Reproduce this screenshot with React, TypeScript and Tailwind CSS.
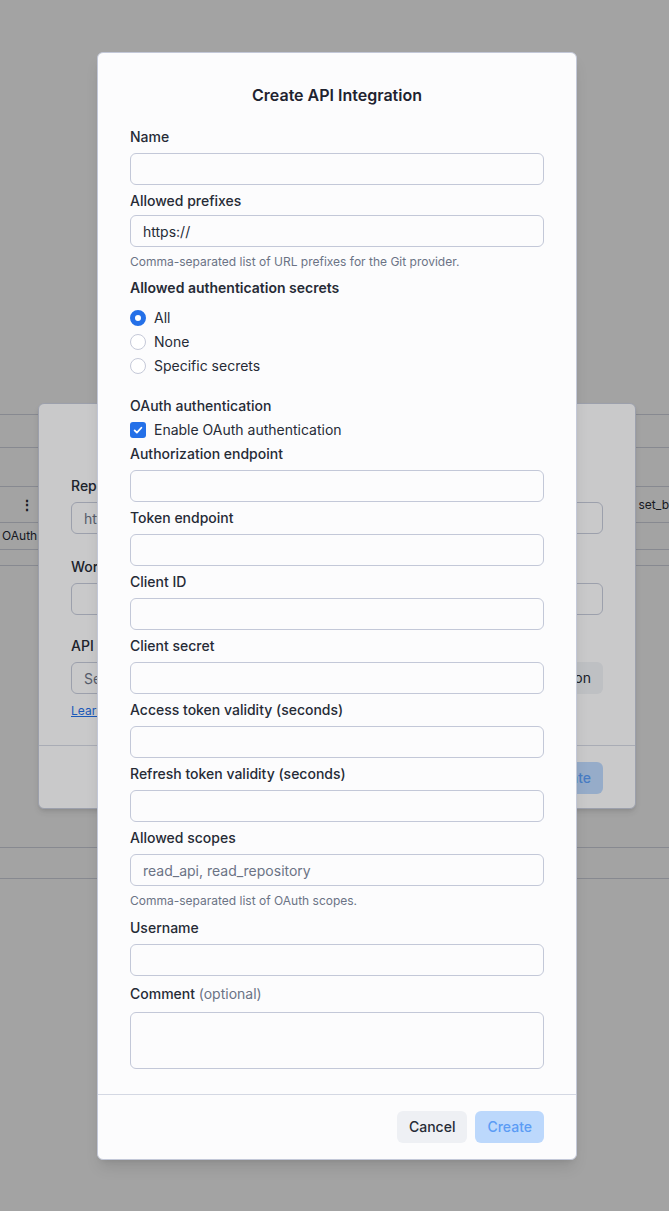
import React from "react";

const FONT = { fontFamily: "Inter, 'Noto Sans', sans-serif" };

const Field = ({
  label,
  value,
  placeholder,
  help,
  tight,
}: {
  label: React.ReactNode;
  value?: string;
  placeholder?: string;
  help?: string;
  tight?: boolean;
}) => (
  <div className="flex flex-col">
    <label className={`text-sm leading-5 font-medium text-[#262b36] ${tight ? "mb-1" : "mb-1.5"}`}>{label}</label>
    <input
      readOnly
      value={value ?? ""}
      placeholder={placeholder}
      className="h-8 w-full rounded-md border border-[#c3c8d8] bg-[#fcfcfd] px-3 text-sm text-[#262b36] placeholder:text-[#6b7385] outline-none"
    />
    {help && <p className="mt-[7px] text-xs leading-4 text-[#6b7385]">{help}</p>}
  </div>
);

const Radio = ({ label, checked }: { label: string; checked?: boolean }) => (
  <div className="flex h-6 items-center gap-2">
    {checked ? (
      <span className="h-4 w-4 rounded-full border-[5px] border-[#2470e8] bg-white" />
    ) : (
      <span className="h-4 w-4 rounded-full border border-[#c5c9d8] bg-white" />
    )}
    <span className="text-sm text-[#262b36]">{label}</span>
  </div>
);

export default function App() {
  return (
    <div className="relative h-[1211px] w-[669px] overflow-hidden bg-white text-[#262b36]" style={FONT}>
      {/* underlying page: a table */}
      <div className="pt-[414px]">
        <div className="h-[33px] border-t border-[#d4d8e3]" />
        <div className="h-[39px] border-t border-[#d4d8e3]" />
        <div className="flex h-[36px] items-center justify-between border-t border-[#d4d8e3] pl-[20px] pr-0">
          <span className="text-sm font-bold leading-none">⋮</span>
          <span className="text-xs">set_b</span>
        </div>
        <div className="flex h-[27px] items-center border-t border-[#d4d8e3] pl-[2px]">
          <span className="text-xs">OAuth</span>
        </div>
        <div className="h-[16px] border-t border-[#d4d8e3]" />
        <div className="h-[282px] border-t border-[#d4d8e3]" />
        <div className="h-[31px] border-t border-[#d4d8e3]" />
        <div className="border-t border-[#d4d8e3]" />
      </div>

      {/* first overlay + background dialog */}
      <div className="absolute inset-0 bg-black/20" />
      <div className="absolute left-[38px] top-[403px] flex h-[406px] w-[598px] flex-col rounded-md border border-[#c3c8d8] bg-[#fcfcfd] shadow-md">
        <div className="flex flex-col px-8 pt-[72px]">
          <div className="flex flex-col">
            <label className="mb-1.5 text-sm font-medium leading-5">Repository URL</label>
            <input readOnly placeholder="https://github.com/org/repo" className="h-8 rounded-md border border-[#c3c8d8] px-3 text-sm placeholder:text-[#6b7385]" />
          </div>
          <div className="mt-[23px] flex flex-col">
            <label className="mb-1.5 text-sm font-medium leading-5">Workspace</label>
            <input readOnly className="h-8 rounded-md border border-[#c3c8d8] px-3 text-sm" />
          </div>
          <div className="mt-[21px] flex flex-col">
            <label className="mb-1.5 text-sm font-medium leading-5">API integration</label>
            <div className="flex gap-2">
              <input readOnly placeholder="Select an integration" className="h-8 flex-1 rounded-md border border-[#c3c8d8] px-3 text-sm placeholder:text-[#6b7385]" />
              <button className="h-8 rounded-md bg-[#eef0f4] px-3 text-sm">New integration</button>
            </div>
            <a className="mt-[9px] text-xs leading-4 text-[#2470e8] underline">Learn more</a>
          </div>
        </div>
        <div className="mt-[26px] flex justify-end border-t border-[#d4d8e3] px-8 pt-4">
          <button className="h-8 rounded-md bg-[#bcd8fc] px-3 text-sm font-medium text-[#5b9cf5]">Create</button>
        </div>
      </div>

      {/* second overlay + main dialog */}
      <div className="absolute inset-0 bg-black/20" />
      <div className="absolute left-[97px] top-[52px] w-[480px] rounded-md border border-[#c3c8d8] bg-[#fcfcfd] shadow-lg">
        <div className="px-8 pt-[30px]">
          <h2 className="text-center text-base font-semibold leading-6 text-[#1f2330]">Create API Integration</h2>
          <div className="mt-5 flex flex-col gap-1.5">
            <Field label="Name" />
            <Field label="Allowed prefixes" tight value="https://" help="Comma-separated list of URL prefixes for the Git provider." />
          </div>
          <div className="mt-2">
            <div className="text-sm font-semibold leading-5 text-[#262b36]">Allowed authentication secrets</div>
            <div className="mt-2 flex flex-col">
              <Radio label="All" checked />
              <Radio label="None" />
              <Radio label="Specific secrets" />
            </div>
          </div>
          <div className="mt-[18px]">
            <div className="text-sm font-medium leading-5 text-[#262b36]">OAuth authentication</div>
            <div className="mt-0.5 flex h-6 items-center gap-2">
              <span className="flex h-4 w-4 items-center justify-center rounded-[3px] bg-[#2470e8]">
                <svg viewBox="0 0 16 16" className="h-3 w-3" fill="none" stroke="white" strokeWidth="2.4" strokeLinecap="round" strokeLinejoin="round">
                  <path d="M3.5 8.5l3 3 6-6.5" />
                </svg>
              </span>
              <span className="text-sm text-[#262b36]">Enable OAuth authentication</span>
            </div>
          </div>
          <div className="mt-0.5 flex flex-col gap-1.5">
            <Field label="Authorization endpoint" />
            <Field label="Token endpoint" />
            <Field label="Client ID" />
            <Field label="Client secret" />
            <Field label="Access token validity (seconds)" />
            <Field label="Refresh token validity (seconds)" />
            <Field label="Allowed scopes" placeholder="read_api, read_repository" help="Comma-separated list of OAuth scopes." />
          </div>
          <div className="mt-[9px]">
            <Field label="Username" />
          </div>
          <div className="mt-2 flex flex-col">
            <label className="mb-2 text-sm font-medium leading-5 text-[#262b36]">
              Comment <span className="font-normal text-[#6b7385]">(optional)</span>
            </label>
            <textarea readOnly className="h-[57px] resize-none rounded-md border border-[#c3c8d8] bg-[#fcfcfd] px-3 py-2 text-sm outline-none" />
          </div>
        </div>
        <div className="mt-[25px] flex justify-end gap-2 border-t border-[#d4d8e3] px-8 pb-4 pt-4">
          <button className="h-8 rounded-md bg-[#eef0f4] px-3 text-sm font-medium text-[#262b36]">Cancel</button>
          <button className="h-8 rounded-md bg-[#bcd8fc] px-3 text-sm font-medium text-[#5b9cf5]">Create</button>
        </div>
      </div>
    </div>
  );
}
